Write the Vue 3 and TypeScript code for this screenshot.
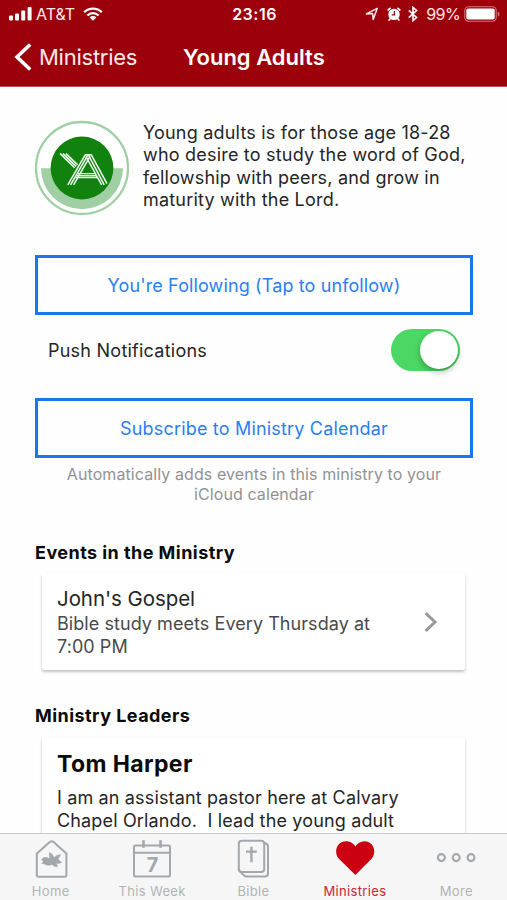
<script setup lang="ts">
interface Tab {
  id: string
  label: string
  active?: boolean
}

const description: string[] = [
  'Young adults is for those age 18-28',
  'who desire to study the word of God,',
  'fellowship with peers, and grow in',
  'maturity with the Lord.',
]

const tabs: Tab[] = [
  { id: 'home', label: 'Home' },
  { id: 'week', label: 'This Week' },
  { id: 'bible', label: 'Bible' },
  { id: 'ministries', label: 'Ministries', active: true },
  { id: 'more', label: 'More' },
]
</script>

<template>
  <div class="screen">
    <header class="header">
      <div class="status">
        <div class="status-left">
          <svg class="signal" width="24" height="14" viewBox="0 0 24 14" fill="#fff">
            <rect x="0" y="8.6" width="4" height="4.9" rx="1" />
            <rect x="6" y="6.4" width="4" height="7.1" rx="1" />
            <rect x="12.2" y="3.6" width="4" height="9.9" rx="1" />
            <rect x="18.6" y="0" width="4" height="13.5" rx="1" />
          </svg>
          <span class="carrier">AT&amp;T</span>
          <svg class="wifi" width="20" height="14" viewBox="0 0 20 14" fill="none" stroke="#fff" stroke-width="2.3">
            <path d="M1.2 5.2a12.6 12.6 0 0 1 17.6 0" />
            <path d="M4.4 8.5a8 8 0 0 1 11.2 0" />
            <path d="M10 13.8L6.6 10.5a4.8 4.8 0 0 1 6.8 0z" fill="#fff" stroke="none" />
          </svg>
        </div>
        <div class="clock">23:16</div>
        <div class="status-right">
          <svg width="14" height="14" viewBox="0 0 14 14" fill="none" stroke="#ffe9ea" stroke-width="1.5" stroke-linejoin="round">
            <path d="M1.4 6.9L12.2 1.4L8.2 12.4L7.6 6.6z" />
          </svg>
          <svg class="alarm" width="14" height="14" viewBox="0 0 14 14">
            <circle cx="7" cy="7.4" r="5.7" fill="#fff" />
            <path d="M1.2 3L3.1 1.3M12.8 3L10.9 1.3M3 12l-.9 1M11 12l.9 1" stroke="#fff" stroke-width="1.7" stroke-linecap="round" />
            <path d="M7.4 4v3.8H4.8" fill="none" stroke="#9c000d" stroke-width="1.2" />
          </svg>
          <svg class="bluetooth" width="10" height="16" viewBox="0 0 10 16" fill="none" stroke="#fff" stroke-width="1.6">
            <path d="M.8 4.3L8.6 11.5L5 14.6V1.4L8.6 4.5L.8 11.7" />
          </svg>
          <span class="percent">99%</span>
          <svg class="battery" width="36" height="16" viewBox="0 0 36 16">
            <rect x=".8" y=".8" width="31.4" height="14.4" rx="3.6" fill="none" stroke="#d0787f" stroke-width="1.1" />
            <rect x="2.3" y="2.4" width="28.4" height="11.2" rx="1.8" fill="#fff" />
            <path d="M33.8 5.4c2.2 1 2.2 4.2 0 5.2z" fill="#d0787f" />
          </svg>
        </div>
      </div>
      <nav class="nav">
        <button class="back" type="button">
          <svg width="18" height="28" viewBox="0 0 18 28" fill="none" stroke="#fff" stroke-width="3.6">
            <path d="M16.2 1.5L3 14L16.2 26.5" />
          </svg>
          <span>Ministries</span>
        </button>
        <h1 class="title">Young Adults</h1>
      </nav>
    </header>

    <main class="content">
      <section class="intro">
        <svg class="logo" width="94" height="94" viewBox="0 0 94 94">
          <circle cx="47" cy="47" r="46" fill="#fff" stroke="#9fcfa2" stroke-width="2.3" />
          <path d="M6 47.2h82a41 41 0 0 1-82 0z" fill="#9fcfa2" />
          <circle cx="47" cy="47" r="31.4" fill="#12820f" />
          <g fill="none" stroke="#effaf0" stroke-width="1.5">
            <path d="M25 32.4L39.6 46.8M28 32.6L41.2 45.4M31 32.6L42.6 43.8" />
            <path d="M32.8 63.8L50.4 33.6M35.6 63.8L53 33.8M38.6 63.8L55 35.4" />
            <path d="M50 33.8H56.6M51 35.5L66.6 63.8M53.4 33.8L69.2 63.8M56.2 33.6L72 62.6" />
            <path d="M42.4 52.6H60.6M41.4 54.6H61.6M40.2 56.5H62.8" stroke-width="1.3" />
          </g>
        </svg>
        <p class="description">
          <span v-for="line in description" :key="line">{{ line }}</span>
        </p>
      </section>

      <button class="outline-btn follow" type="button">You're Following (Tap to unfollow)</button>

      <div class="push">
        <span class="push-label">Push Notifications</span>
        <span class="switch" role="switch" aria-checked="true"><span class="knob"></span></span>
      </div>

      <button class="outline-btn subscribe" type="button">Subscribe to Ministry Calendar</button>
      <p class="hint">Automatically adds events in this ministry to your<br />iCloud calendar</p>

      <h2 class="heading">Events in the Ministry</h2>
      <article class="card event">
        <div>
          <h3 class="event-name">John's Gospel</h3>
          <p class="event-text">Bible study meets Every Thursday at<br />7:00 PM</p>
        </div>
        <svg width="14" height="20" viewBox="0 0 14 20" fill="none" stroke="#9a9a9a" stroke-width="3">
          <path d="M1.6 1.2L11 10L1.6 18.8" />
        </svg>
      </article>

      <h2 class="heading leaders">Ministry Leaders</h2>
      <article class="card leader">
        <h3 class="leader-name">Tom Harper</h3>
        <p class="leader-text">I am an assistant pastor here at Calvary<br />Chapel Orlando.&nbsp; I lead the young adult</p>
      </article>
    </main>

    <footer class="tabs">
      <div v-for="tab in tabs" :key="tab.id" class="tab" :class="[tab.id, { active: tab.active }]">
        <svg v-if="tab.id === 'home'" width="40" height="40" viewBox="0 0 40 40" fill="none" stroke="#a3a8ad" stroke-width="2" stroke-linejoin="round">
          <path d="M5.8 14.5L18.8 3q1.9-1.4 3.8 0L35.4 14.5V36q0 1.8-1.8 1.8H7.6q-1.8 0-1.8-1.8z" />
          <path d="M10.6 20.6Q12.4 17.4 16 18.6L19 19.6Q17.8 16 18.6 13.2Q21.6 15 23.2 18.4Q25.6 16 29.6 15.4Q28.4 18.2 27 20.2L30.8 23.6Q28.6 24.8 25.4 24.2L26.6 27.8Q23 28 21 25.4Q16.4 27.4 13.6 25L10.8 24.4L12.4 22.6z" fill="#a3a8ad" stroke-width=".5" />
        </svg>
        <svg v-else-if="tab.id === 'week'" width="40" height="40" viewBox="0 0 40 40" fill="none" stroke="#a3a8ad" stroke-width="2">
          <rect x="2" y="6.4" width="36" height="31.2" rx="1.5" />
          <path d="M2 13.8h36" />
          <path d="M11.5 1.2v7.6M28.5 1.2v7.6" stroke-width="2.6" />
          <text class="day" x="20.6" y="33.2" text-anchor="middle">7</text>
        </svg>
        <svg v-else-if="tab.id === 'bible'" width="40" height="40" viewBox="0 0 40 40" fill="none" stroke="#a3a8ad" stroke-width="2" stroke-linejoin="round">
          <rect x="5.8" y="1.8" width="25.4" height="31.2" rx="3" />
          <path d="M5.8 30v1.4L10.8 36.2q1.4 1.4 3.2 1.4H32q3 0 3-3V7.5q0-3-3.6-3.6" />
          <path d="M18.4 7.8v15.4M13 12.6h10.8" stroke-width="2.4" />
        </svg>
        <svg v-else-if="tab.id === 'ministries'" width="40" height="40" viewBox="0 0 40 40" fill="#cb0010">
          <path d="M20.4 36L3.6 19.4C-1.4 13.6 1.4 2.2 10.8 2.2c4.6 0 7.6 2.2 9.6 5.2 2-3 5-5.2 9.2-5.2 9.4 0 12.2 11.4 7.2 17.2z" />
        </svg>
        <svg v-else width="40" height="40" viewBox="0 0 40 40" fill="none" stroke="#a3a8ad" stroke-width="2.1">
          <circle cx="5.4" cy="18.6" r="3.5" />
          <circle cx="20.2" cy="18.6" r="3.5" />
          <circle cx="35" cy="18.6" r="3.5" />
        </svg>
        <span class="tab-label">{{ tab.label }}</span>
      </div>
    </footer>
  </div>
</template>

<style>
body {
  background: #fff;
  overflow: hidden;
}
</style>

<style scoped>
.screen {
  width: 507px;
  height: 900px;
  display: flex;
  flex-direction: column;
  overflow: hidden;
  background: #fefefe;
  color: #252525;
  font-family: Inter, "Liberation Sans", sans-serif;
}
h1, h2, h3, p {
  margin: 0;
}
button {
  font: inherit;
  background: none;
  border: 0;
  padding: 0;
}
svg {
  display: block;
  flex: none;
}
.header {
  flex: none;
  box-sizing: border-box;
  height: 87px;
  background: #9c000b;
  border-bottom: 1px solid #b9505a;
  color: #fff;
}
.status {
  display: grid;
  grid-template-columns: 1fr auto 1fr;
  align-items: center;
  height: 28px;
  padding: 0 7px 0 9px;
  font-size: 16px;
}
.status-left, .status-right {
  display: flex;
  align-items: center;
}
.status-right {
  justify-content: flex-end;
}
.carrier {
  margin-left: 3px;
  color: #ffe9ea;
}
.wifi {
  margin-left: 8px;
}
.clock {
  font-weight: 600;
  font-size: 16px;
  letter-spacing: 0.5px;
}
.alarm {
  margin-left: 8px;
}
.bluetooth {
  margin-left: 7px;
}
.percent {
  margin-left: 8px;
  letter-spacing: -0.6px;
  color: #ffe9ea;
}
.battery {
  margin-left: 4px;
}
.nav {
  display: flex;
  align-items: center;
  height: 57px;
  padding-left: 14px;
}
.back {
  display: flex;
  align-items: center;
  gap: 7px;
  width: 169px;
  color: #ffe9ea;
  font-size: 22px;
  letter-spacing: -0.25px;
}
.title {
  font-size: 22px;
  font-weight: 600;
}
.content {
  flex: 1;
  min-height: 0;
  overflow: hidden;
  padding: 33px 34px 0 35px;
}
.intro {
  display: flex;
  gap: 14px;
  height: 96px;
  align-items: center;
}
.logo {
  overflow: visible;
}
.description {
  display: flex;
  flex-direction: column;
  margin-top: -3px;
  font-size: 18px;
  line-height: 22.5px;
  letter-spacing: 0.2px;
  white-space: nowrap;
}
.outline-btn {
  display: block;
  box-sizing: border-box;
  width: 438px;
  height: 60px;
  padding-top: 1px;
  border: 3px solid #1c76ee;
  color: #2a7ff2;
  font-size: 18px;
  letter-spacing: 0.12px;
}
.follow {
  margin-top: 39px;
}
.subscribe {
  letter-spacing: 0.18px;
}
.push {
  display: flex;
  align-items: center;
  justify-content: space-between;
  height: 42px;
  margin: 14px 13px 27px 13px;
  font-size: 18px;
  letter-spacing: 0.24px;
}
.switch {
  display: flex;
  justify-content: flex-end;
  box-sizing: border-box;
  width: 69px;
  height: 42px;
  padding: 2px;
  border-radius: 21px;
  background: #4bd763;
}
.knob {
  width: 38px;
  height: 38px;
  border-radius: 50%;
  background: #fff;
  box-shadow: 0 3px 6px rgba(0, 0, 0, 0.28);
}
.hint {
  margin-top: 7px;
  text-align: center;
  font-size: 16px;
  line-height: 19.5px;
  letter-spacing: 0.09px;
  color: #929292;
}
.heading {
  margin: 38px 0 0;
  font-size: 18px;
  line-height: 22px;
  font-weight: 700;
  letter-spacing: 0.45px;
  color: #0b0b0b;
}
.card {
  width: 423px;
  box-sizing: border-box;
  margin-left: 7px;
  border-radius: 2px;
  background: #fff;
  box-shadow: 0 2px 3px rgba(0, 0, 0, 0.24);
}
.event {
  display: flex;
  justify-content: space-between;
  align-items: center;
  height: 97px;
  margin-top: 9px;
  padding: 1px 27px 0 15px;
}
.event-name {
  font-size: 20.5px;
  line-height: 26px;
  font-weight: 400;
  letter-spacing: -0.07px;
}
.event-text {
  font-size: 18px;
  line-height: 23px;
  letter-spacing: 0.06px;
  color: #4a4a4a;
}
.leaders {
  margin-top: 35px;
}
.leader {
  height: 140px;
  margin-top: 10px;
  padding: 13px 15px;
}
.leader-name {
  font-size: 23px;
  line-height: 28px;
  font-weight: 700;
  letter-spacing: 0.4px;
  color: #0b0b0b;
}
.leader-text {
  margin-top: 9px;
  font-size: 18px;
  line-height: 22.5px;
  letter-spacing: 0.15px;
}
.tabs {
  flex: none;
  box-sizing: border-box;
  height: 67px;
  display: grid;
  grid-template-columns: repeat(5, 1fr);
  background: #f6f6f6;
  border-top: 1px solid #c9c9c9;
  color: #b1b4b7;
}
.tab {
  display: flex;
  flex-direction: column;
  align-items: center;
  padding-top: 5px;
}
.tab-label {
  margin-top: 4px;
  font-size: 13px;
  line-height: 16px;
  letter-spacing: 0.35px;
}
.active {
  color: #cf2433;
}
.day {
  font: 700 20px Inter, sans-serif;
  fill: #a3a8ad;
  stroke: none;
}
</style>
